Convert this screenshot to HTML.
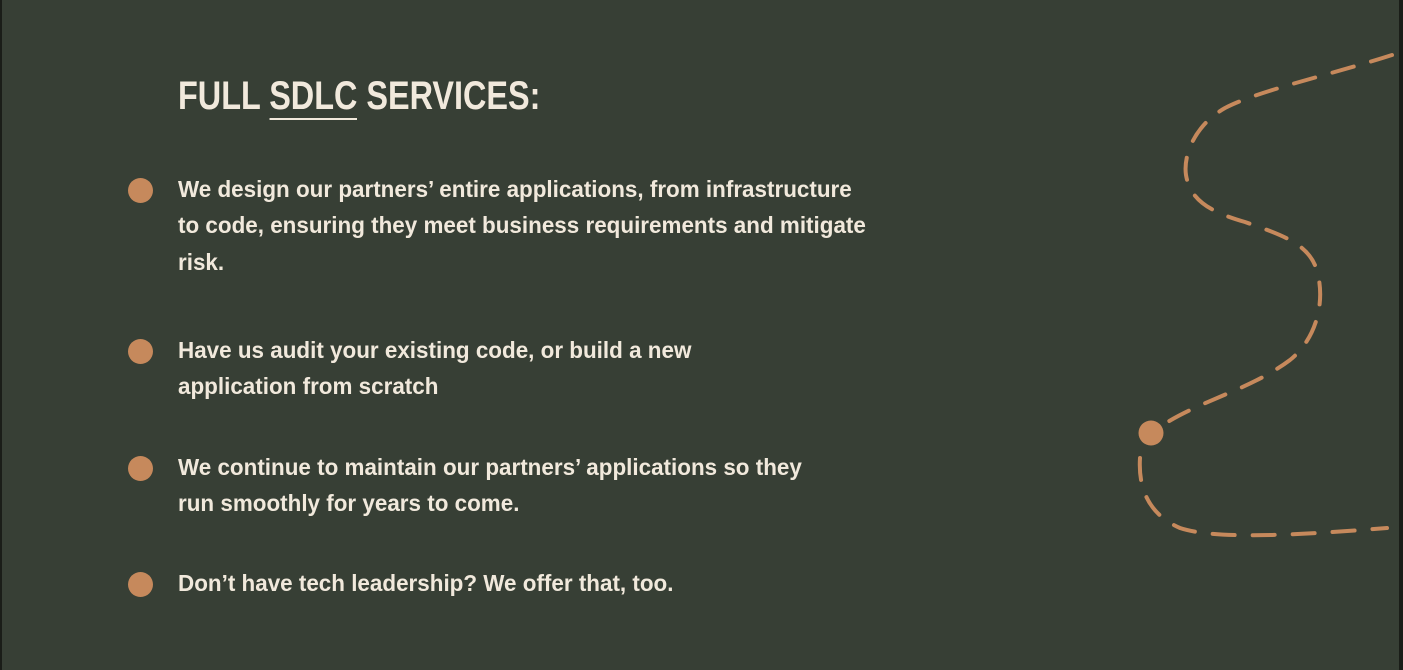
<!DOCTYPE html>
<html><head><meta charset="utf-8"><style>
html,body{margin:0;padding:0}
body{width:1403px;height:670px;background:#373f35;position:relative;overflow:hidden;font-family:"Liberation Sans",sans-serif;color:#f1e9dc;border-left:2px solid #1a1d18;border-right:4px solid #1a1d18;box-sizing:border-box}
.t{position:absolute;left:176px;top:74px;font-size:40px;font-weight:bold;white-space:nowrap;transform-origin:0 0;transform:scaleX(0.81)}
.t u{text-decoration:none;border-bottom:2px solid #f1e9dc;padding-bottom:0}
.l{position:absolute;left:176px;font-size:23px;font-weight:bold;white-space:nowrap;transform-origin:0 50%;line-height:30px;transform:scaleX(0.975)}
.d{position:absolute;left:126px;width:25px;height:25px;border-radius:50%;background:#c6895c}
</style></head><body>
<div class="t">FULL <u>SDLC</u> SERVICES:</div>
<div class="d" style="top:178px"></div>
<div class="l" style="top:174px">We design our partners’ entire applications, from infrastructure</div>
<div class="l" style="top:210px">to code, ensuring they meet business requirements and mitigate</div>
<div class="l" style="top:247px">risk.</div>
<div class="d" style="top:339px"></div>
<div class="l" style="top:335px">Have us audit your existing code, or build a new</div>
<div class="l" style="top:371px">application from scratch</div>
<div class="d" style="top:456px"></div>
<div class="l" style="top:452px">We continue to maintain our partners’ applications so they</div>
<div class="l" style="top:488px">run smoothly for years to come.</div>
<div class="d" style="top:572px"></div>
<div class="l" style="top:568px">Don’t have tech leadership? We offer that, too.</div>
<svg style="position:absolute;left:-2px;top:0" width="1403" height="670">
<path d="M1392,55 C1330,75 1260,90 1225,108 C1195,125 1183,155 1186,175 C1190,200 1210,212 1245,222 C1285,236 1312,245 1318,275 C1325,305 1315,340 1290,360 C1250,390 1200,400 1158,428" fill="none" stroke="#c6895c" stroke-width="4" stroke-linecap="round" stroke-dasharray="22 18"/>
<path d="M1140,458 C1138,490 1150,515 1180,528 C1215,540 1300,535 1387,528" fill="none" stroke="#c6895c" stroke-width="4" stroke-linecap="round" stroke-dasharray="22 18"/>
<circle cx="1151" cy="433" r="12.5" fill="#c6895c"/>
</svg>
</body></html>
